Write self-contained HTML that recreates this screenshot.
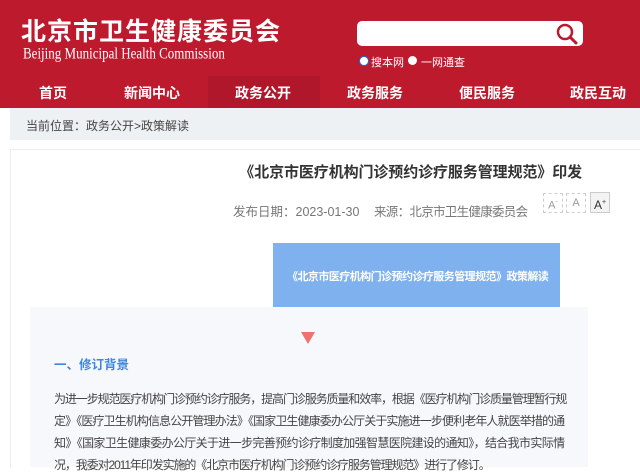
<html><head><style>
body{margin:0;width:640px;height:467px;overflow:hidden;background:#fff;font-family:"Liberation Sans","Noto Sans CJK SC",sans-serif;position:relative}
.a{position:absolute;white-space:nowrap}
.p{position:absolute;left:54px;width:510px;font-size:12px;letter-spacing:-1.1px;color:#444;white-space:nowrap;text-align:justify;text-align-last:justify}
</style></head><body>
<div class="a" style="left:0;top:0;width:640px;height:108px;background:#be1a2e"></div>
<div class="a" style="left:21px;top:12px;font-size:25px;font-weight:bold;color:#fff;letter-spacing:1px">北京市卫生健康委员会</div>
<div class="a" style="left:23px;top:44px;font-family:'Liberation Serif',serif;font-size:13px;color:#fff;transform:scaleY(1.2);transform-origin:0 0">Beijing Municipal Health Commission</div>
<div class="a" style="left:357px;top:21px;width:226px;height:25px;background:#fff;border-radius:5px"></div>
<svg class="a" style="left:554px;top:22px" width="26" height="24"><circle cx="11" cy="10" r="7" fill="none" stroke="#be1a2e" stroke-width="2.5"/><line x1="16" y1="15" x2="22" y2="21" stroke="#be1a2e" stroke-width="3" stroke-linecap="round"/></svg>
<div class="a" style="left:359px;top:56px;width:8px;height:8px;border-radius:50%;background:#fff;border:1px solid #1a6fe0"></div>
<div class="a" style="left:371px;top:54px;font-size:11px;color:#fff">搜本网</div>
<div class="a" style="left:408px;top:56px;width:9px;height:9px;border-radius:50%;background:#fff"></div>
<div class="a" style="left:421px;top:54px;font-size:11px;color:#fff">一网通查</div>
<div class="a" style="left:208px;top:76px;width:112px;height:32px;background:#b0172a"></div>
<div class="a" style="left:0;top:83px;width:640px;font-size:14px;font-weight:bold;color:#fff">
<span class="a" style="left:39px">首页</span><span class="a" style="left:124px">新闻中心</span><span class="a" style="left:235px">政务公开</span><span class="a" style="left:347px">政务服务</span><span class="a" style="left:459px">便民服务</span><span class="a" style="left:570px">政民互动</span></div>
<div class="a" style="left:10px;top:108px;width:630px;height:32px;background:#eef1f4"></div>
<div class="a" style="left:26px;top:117px;font-size:12px;color:#444">当前位置：政务公开&gt;政策解读</div>
<div class="a" style="left:10px;top:149px;width:630px;height:318px;border-left:1px solid #eee;border-top:1px solid #eee"></div>
<div class="a" style="right:58px;top:161px;font-size:15px;font-weight:bold;color:#333;letter-spacing:-0.1px">《北京市医疗机构门诊预约诊疗服务管理规范》印发</div>
<div class="a" style="left:233px;top:201px;font-size:12.5px;color:#777">发布日期：2023-01-30</div>
<div class="a" style="left:374px;top:201px;font-size:12.5px;color:#777;letter-spacing:-0.7px">来源：北京市卫生健康委员会</div>
<div class="a" style="left:543px;top:193px;width:18px;height:18px;border:1px dashed #ccc;font-size:11px;color:#999;text-align:center;line-height:18px">A<sup style="font-size:7px">-</sup></div>
<div class="a" style="left:566px;top:193px;width:18px;height:18px;border:1px dashed #ccc;font-size:11px;color:#999;text-align:center;line-height:18px">A</div>
<div class="a" style="left:590px;top:192px;width:18px;height:19px;border:1px solid #ccc;background:#f3f3f3;font-size:12px;color:#333;text-align:center;line-height:19px">A<sup style="font-size:7px">+</sup></div>
<div class="a" style="left:273px;top:243px;width:287px;height:64px;background:#7fb1ee"></div>
<div class="a" style="left:287px;top:268px;font-size:11px;font-weight:bold;color:#fff;letter-spacing:-0.55px">《北京市医疗机构门诊预约诊疗服务管理规范》政策解读</div>
<div class="a" style="left:30px;top:307px;width:558px;height:160px;background:#f6f8fc"></div>
<svg class="a" style="left:301px;top:332px" width="14" height="12"><path d="M0 0H14L7 12Z" fill="#f07070"/></svg>
<div class="a" style="left:54px;top:354px;font-size:12.5px;font-weight:bold;color:#3e87de">一、修订背景</div>
<div class="p" style="top:390px">为进一步规范医疗机构门诊预约诊疗服务，提高门诊服务质量和效率，根据《医疗机构门诊质量管理暂行规</div>
<div class="p" style="top:412px">定》《医疗卫生机构信息公开管理办法》《国家卫生健康委办公厅关于实施进一步便利老年人就医举措的通</div>
<div class="p" style="top:434px">知》《国家卫生健康委办公厅关于进一步完善预约诊疗制度加强智慧医院建设的通知》，结合我市实际情</div>
<div class="p" style="top:456px;text-align-last:left">况，我委对2011年印发实施的《北京市医疗机构门诊预约诊疗服务管理规范》进行了修订。</div>
</body></html>
